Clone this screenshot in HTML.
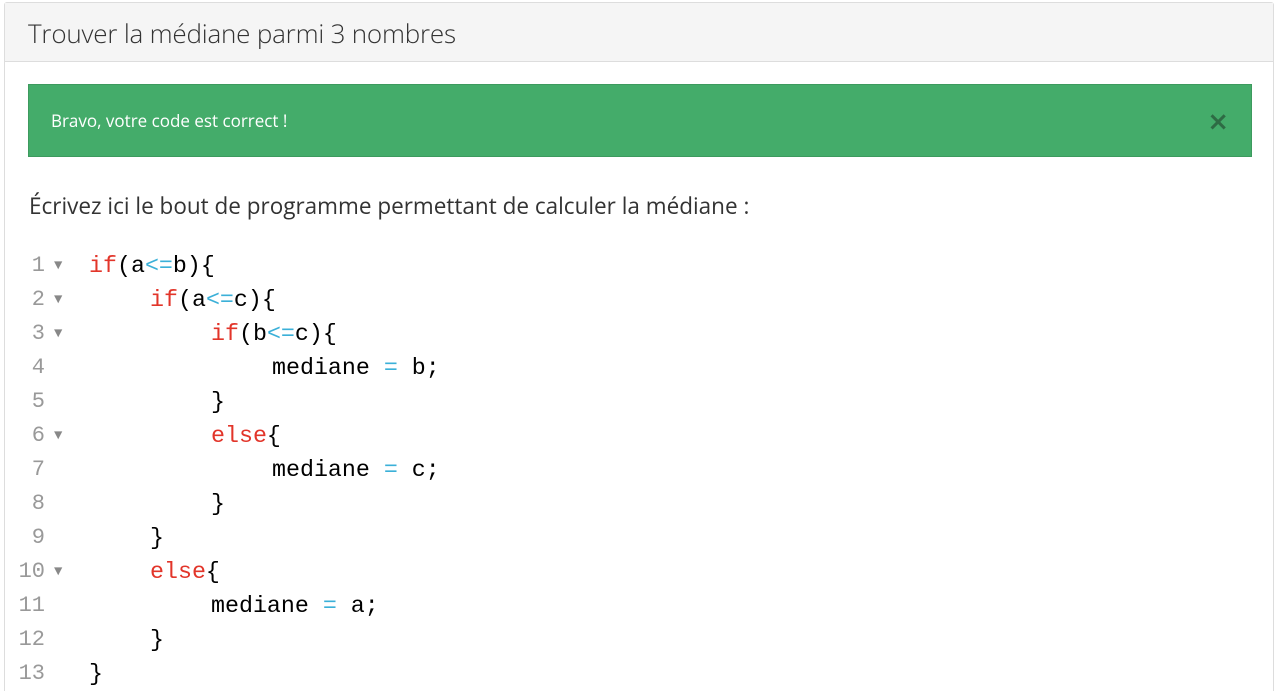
<!DOCTYPE html>
<html><head><meta charset="utf-8"><style>
html,body{margin:0;background:#fff;width:1278px;height:691px;overflow:hidden;font-family:"Open Sans","Liberation Sans",sans-serif}
body{position:relative}
.panel{position:absolute;left:4px;top:2px;width:1268px;height:720px;border:1px solid #ddd;border-radius:3px}
.hd{height:58px;background:#f5f5f5;border-bottom:1px solid #ddd;font-size:26px;color:#333;font-weight:300;line-height:60px;padding-left:23px;letter-spacing:-0.2px}
.alert{position:absolute;left:23px;top:81px;width:1222px;height:71px;background:#44ac6a;border:1px solid #3d9a5e;color:#fff;font-size:17px;line-height:72px;padding-left:0}
.alert span{position:absolute;left:22px}
.x{position:absolute;right:22px;top:1px;font-size:26px;font-weight:bold;color:#2e6b44;font-family:"DejaVu Sans",sans-serif}
.p{position:absolute;left:24px;top:187px;font-size:22.5px;color:#333}
.code{position:absolute;left:0;top:246px;font-family:"Liberation Mono",monospace;font-size:23.3px}
.l{height:34px;line-height:34px;position:relative;white-space:pre}
.n{position:absolute;color:#999;width:40px;text-align:right;left:0;font-size:22px}
.a{position:absolute;left:49px;color:#888;font-size:14px}
.t{position:absolute;left:84px;color:#000}
.i1{left:145px}.i2{left:206px}.i3{left:267px}
.k{color:#e2352a}.o{color:#3bb0d8}
</style></head><body>
<div class="panel"><div class="hd">Trouver la médiane parmi 3 nombres</div>
<div class="alert"><span>Bravo, votre code est correct !</span><div class="x">×</div></div>
<div class="p">Écrivez ici le bout de programme permettant de calculer la médiane :</div>
<div class="code">
<div class="l"><span class="n">1</span><span class="a">▼</span><span class="t"><span class="k">if</span>(a<span class="o">&lt;=</span>b){</span></div>
<div class="l"><span class="n">2</span><span class="a">▼</span><span class="t i1"><span class="k">if</span>(a<span class="o">&lt;=</span>c){</span></div>
<div class="l"><span class="n">3</span><span class="a">▼</span><span class="t i2"><span class="k">if</span>(b<span class="o">&lt;=</span>c){</span></div>
<div class="l"><span class="n">4</span><span class="t i3">mediane <span class="o">=</span> b;</span></div>
<div class="l"><span class="n">5</span><span class="t i2">}</span></div>
<div class="l"><span class="n">6</span><span class="a">▼</span><span class="t i2"><span class="k">else</span>{</span></div>
<div class="l"><span class="n">7</span><span class="t i3">mediane <span class="o">=</span> c;</span></div>
<div class="l"><span class="n">8</span><span class="t i2">}</span></div>
<div class="l"><span class="n">9</span><span class="t i1">}</span></div>
<div class="l"><span class="n">10</span><span class="a">▼</span><span class="t i1"><span class="k">else</span>{</span></div>
<div class="l"><span class="n">11</span><span class="t i2">mediane <span class="o">=</span> a;</span></div>
<div class="l"><span class="n">12</span><span class="t i1">}</span></div>
<div class="l"><span class="n">13</span><span class="t">}</span></div>
</div></div>
</body></html>
